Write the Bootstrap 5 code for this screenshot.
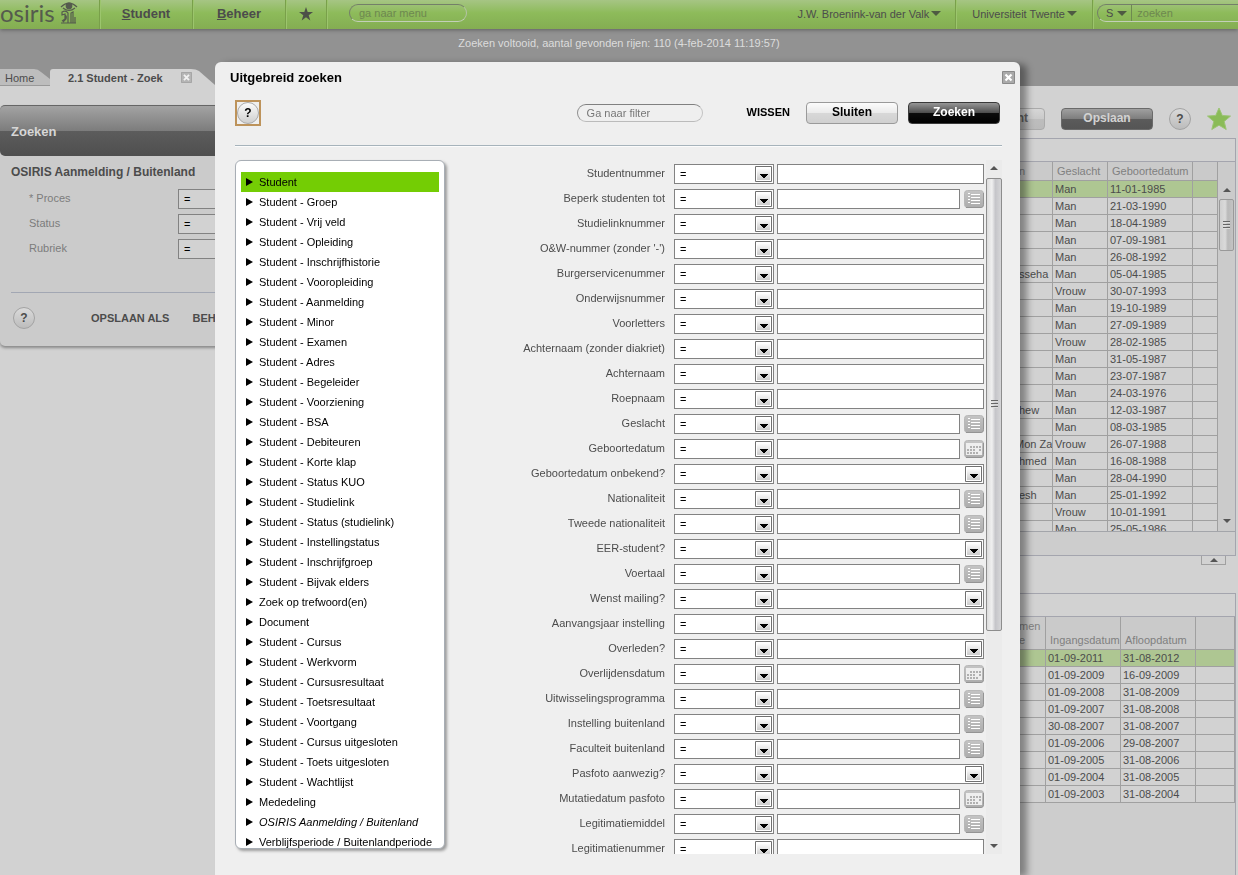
<!DOCTYPE html>
<html lang="nl">
<head>
<meta charset="utf-8">
<meta name="viewport" content="width=device-width, initial-scale=1">
<title>Osiris - Uitgebreid zoeken</title>
<link href="https://cdn.jsdelivr.net/npm/bootstrap@5.3.0/dist/css/bootstrap.min.css" rel="stylesheet">
<style>
  body { font: 11px/16px "Liberation Sans", Arial, sans-serif; color: #4c4c4c; background: #929292; height: 100vh; overflow: hidden; }
  a { color: inherit; text-decoration: none; }
  button, input, select { font: inherit; color: inherit; }
  button { padding: 0; border: 0; background: none; }
  svg { display: block; flex: none; }

  /* top bar */
  .topbar { height: 29px; background: linear-gradient(#a6c584, #8dbb5a 45%, #84ad52); box-shadow: 0 1px 4px rgba(0,0,0,.35); position: relative; }
  .topbar .cell { height: 29px; border-right: 1px solid #79a04a; box-shadow: 1px 0 #9cc56d; display: flex; align-items: center; justify-content: center; padding-bottom: 2px; }
  .topbar .logo { width: 100px; font: 24px/24px Lato, sans-serif; color: #555b4e; gap: 5px; padding-bottom: 4px; }
  .menuitem { width: 93px; font-size: 13px; font-weight: bold; }
  .favcell { width: 41px; }
  .pill { height: 18px; border: 1px solid #747f69; border-bottom-color: #c3cfb8; border-right-color: #b4c3a5; border-radius: 9px; background: transparent; padding: 0 9px; outline: 0; }
  .menufind { width: 118px; margin-left: 22px; }
  .topbar .pill::placeholder, .quick input::placeholder { color: #6d8750; opacity: 1; }
  .quick { width: 160px; margin-right: -19px; padding: 0; }
  .quick input { border: 0; background: none; width: 100px; padding: 0 5px; border-left: 1px solid #6e8a50; height: 16px; }
  .caret { width: 0; border: 5px solid transparent; border-top-color: #4e5a42; border-bottom: 0; }
  .user { padding: 0 14px 0 0; gap: 2px; }
  .school { padding: 0 15px 0 16px; gap: 2px; }
  .status-line { height: 40px; padding-top: 6px; color: #dcdcdc; }

  /* tabs */
  .tab { height: 17px; position: relative; z-index: 0; display: flex; align-items: center; }
  .tab svg.shape { position: absolute; left: 0; top: 0; z-index: -1; }
  .tab-home { width: 50px; padding-left: 5px; }
  .tab-active { width: 166px; padding-left: 18px; font-weight: bold; gap: 18px; }
  .page { background: #d2d2d2; flex: 1; min-height: 0; }

  /* side panel */
  .side { width: 405px; margin-top: 19px; background: #cbcbcb; height: 241px; border-radius: 5px; box-shadow: 0 2px 3px rgba(0,0,0,.35); }
  .side-head { height: 51px; padding: 1px 11px 0; font-size: 13px; font-weight: bold; color: #d6d6d6; border-radius: 5px; border-top: 1px solid #666; background: linear-gradient(#a3a3a3, #7c7c7c 50%, #5c5c5c 50%, #4f4f4f); }
  .side h2 { font-size: 12px; line-height: 16px; font-weight: bold; margin: 8px 0 9px 11px; }
  .side-row { height: 25px; padding-left: 29px; color: #7c7c7c; }
  .side-row label { width: 149px; line-height: 18px; }
  .side-foot { margin: 28px 0 0 11px; border-top: 1px solid #a2a7b3; padding: 14px 0 0 2px; font-weight: bold; gap: 23px; }
  .side-foot .help { margin-right: 33px; }
  .side .pick { background-color: #d2d2d2; }
  .help { width: 22px; height: 22px; border-radius: 50%; border: 1px solid #a3a3a3; background: linear-gradient(#dadada, #bcbcbc); font-size: 12px; line-height: 19px; font-weight: bold; text-align: center; }

  /* buttons */
  .act { width: 92px; height: 22px; border: 1px solid #9a9a9a; border-radius: 4px; font-size: 12px; line-height: 18px; font-weight: bold; color: #000; padding-bottom: 2px; background: linear-gradient(#fcfcfc, #ebebeb 48%, #d8d8d8 50%, #d0d0d0); }
  .act-dark { color: #fff; border-color: #3a3a3a; background: linear-gradient(#969696, #4e4e4e 48%, #0c0c0c 50%, #000); }
  .page .act { color: #666; border-color: #aaa; background: linear-gradient(#d6d6d6, #cacaca 48%, #bdbdbd 50%, #bababa); }
  .page .act-dark { color: #d2d2d2; border-color: #6a6a6a; background: linear-gradient(#a0a0a0, #7e7e7e 48%, #5b5b5b 50%, #555); }

  /* result tables */
  .results { min-width: 0; }
  .tools { height: 52px; padding: 22px 7px 0 0; }
  .grid-frame { border: 1px solid #a4a5ae; margin-right: 2px; }
  .grid-strip { height: 23px; border-bottom: 1px solid #a4a5ae; }
  .grid-view { height: 369px; overflow: hidden; }
  .grid-foot { height: 24px; border-top: 1px solid #a3a5aa; background: #cdcdcd; }
  .data { table-layout: fixed; width: 100%; border-collapse: separate; border-spacing: 0; }
  .data th, .data td { padding: 0 0 0 2px; height: 17px; line-height: 16px; border: 0 solid #a0a0a0; border-width: 0 1px 1px 0; white-space: nowrap; overflow: hidden; }
  .data th { background: #cacaca; color: #808080; font-weight: normal; height: 19px; padding: 0 0 2px 4px; line-height: 14px; vertical-align: bottom; }
  .data .person { padding-left: 4px; }
  .data .flush { padding: 0; text-align: right; }
  .data .picked td { background: #aec692; }
  .data-period th { height: 33px; }
  .c25 { width: 25px; } .c31 { width: 31px; } .c38 { width: 38px; } .c39 { width: 39px; } .c55 { width: 55px; } .c75 { width: 75px; } .c85 { width: 85px; }
  .bar { width: 17px; background: #cbcbcb; padding: 0 1px; flex: none; }
  .bar-top { height: 37px; padding-top: 26px; }
  .bar .thumb { height: 52px; border: 1px solid #999; border-radius: 2px; background: linear-gradient(90deg, #cfcfcf, #dadada 40%, #b9b9b9 60%, #c4c4c4); }
  .up, .down { width: 0; margin: 0 auto; border: 4px solid transparent; border-bottom: 4px solid #555; border-top: 0; }
  .down { border-top: 4px solid #555; border-bottom: 0; }
  .grip { width: 7px; height: 9px; background: repeating-linear-gradient(#666 0 1px, #ddd 1px 2px, transparent 2px 3px); }
  .fold { width: 25px; height: 9px; border: 1px solid #a0a0a0; border-top: 0; margin-right: 12px; }
  .period-frame { background: #cdcdcd; margin-top: 28px; border-bottom: 0; }
  .period-frame .grid-strip, .period-frame tbody { background: #d2d2d2; }

  /* dialog */
  .layer { position: fixed; inset: 62px 0 0; padding-right: 3px; }
  .dialog { width: 805px; margin: 0 auto; height: 100%; background: #efefef; border-radius: 6px 6px 0 0; box-shadow: 7px 2px 7px rgba(0,0,0,.38); }
  .dialog-title { height: 38px; padding: 9px 5px 0 15px; }
  .dialog-title h1 { font-size: 13px; line-height: 13px; font-weight: bold; margin: 0; color: #000; }
  .dialog-tools { margin: 0 18px 0 20px; height: 46px; border-bottom: 1px solid #a6b3bb; box-shadow: 0 1px #fbfbfb; }
  .dialog-tools .act { margin-top: 2px; }
  .dialog-tools .act-dark { margin: 2px 2px 0 10px; }
  .focusbox { border: 2px solid #bd935b; width: 26px; height: 26px; padding: 0; }
  .focusbox .help { display: block; color: #000; border-color: #aaa; background: linear-gradient(#fbfbfb, #cfcfcf); }
  .dialog .pill { width: 126px; border-color: #808080 #c4c4c4 #bbb #909090; margin-right: 44px; }
  .dialog .pill::placeholder { color: #777; opacity: 1; }
  .dialog-body { flex: 1; min-height: 0; margin: 14px 18px 21px 20px; }
  .tree { width: 210px; margin-bottom: 5px; background: #fff; border: 1px solid #a8aeb5; border-radius: 6px; box-shadow: 2px 2px 3px rgba(0,0,0,.35); padding: 11px 5px 0; overflow: hidden; color: #000; }
  .tree a { height: 20px; line-height: 20px; padding-left: 5px; gap: 6px; white-space: nowrap; }
  .tree a::before { content: ""; border: 4px solid transparent; border-left: 7px solid #000; border-right: 0; }
  .tree a.chosen { background: #74cd04; }
  .fields { flex: 1; min-width: 0; overflow: hidden; padding: 4px 2px 0 0; }
  .line { height: 25px; gap: 3px; }
  .line label { flex: 1; text-align: right; padding-right: 6px; line-height: 18px; }
  .pick, .entry { height: 20px; border: 1px solid #828282; border-radius: 0; background: #fff; padding: 0 5px; line-height: 18px; color: #000; outline: 0; min-width: 0; }
  .pick { width: 100px; appearance: none; background: #fff url("data:image/svg+xml,%3Csvg xmlns='http://www.w3.org/2000/svg' width='17' height='16'%3E%3ClinearGradient id='g' x2='0' y2='1'%3E%3Cstop stop-color='%23fff'/%3E%3Cstop offset='1' stop-color='%23ccc'/%3E%3C/linearGradient%3E%3Cpath d='M.5 .5h16v15H.5z' fill='%23fff' stroke='%23707070'/%3E%3Cpath d='M2 2h13v12H2z' fill='url(%23g)'/%3E%3Cpath d='M5 8h8v1h-1v1h-1v1h-1v1H8v-1H7v-1H6V9H5z'/%3E%3C/svg%3E") no-repeat right 1px top 1px; }
  .value { width: 207px; gap: 4px; }
  .value > :first-child { flex: 1; width: 0; }
  .scroller { width: 16px; background: #ebebeb; padding-top: 6px; }
  .scroller .thumb { height: 453px; margin-top: 8px; border: 1px solid #8d8d8d; border-radius: 2px; background: linear-gradient(90deg, #ddd, #f0f0f0 35%, #c5c5c9 60%, #d6d6d8); }
  .scroller .down { margin-top: auto; margin-bottom: 6px; }
</style>
</head>
<body class="d-flex flex-column">

<svg width="0" height="0" class="position-absolute" aria-hidden="true">
  <defs>
    <linearGradient id="grey" x2="0" y2="1"><stop stop-color="#c4c4c4"/><stop offset="1" stop-color="#acacac"/></linearGradient>
    <symbol id="list" viewBox="0 0 20 18">
      <rect x=".5" y=".5" width="19" height="17" rx="3" fill="url(#grey)" stroke="#b8b8b8"/>
      <path d="M2 17.500h15q2.500 0 2.500-3V3" fill="none" stroke="#949494"/>
      <path d="M4 3.500h2M4 6.500h2M4 9.500h2M4 12.500h2M7 4.500h9M7 7.500h9M7 10.500h9M7 13.500h9" stroke="#fff"/>
    </symbol>
    <symbol id="calendar" viewBox="0 0 20 18">
      <rect x=".5" y=".5" width="19" height="17" rx="3" fill="url(#grey)" stroke="#b8b8b8"/>
      <path d="M2 17.500h15q2.500 0 2.500-3V3" fill="none" stroke="#949494"/>
      <path d="M2 3h16v12H2z" fill="#eee"/>
      <path d="M6 7h11M3 10h8M15 10h2M3 13h11" stroke="#b0b0b0" stroke-width="2" stroke-dasharray="2 1"/>
    </symbol>
    <symbol id="cross" viewBox="0 0 13 13">
      <path d="M.5 .5h12v12H.5z" fill="#aaa" stroke="#8a8a8a"/>
      <path d="M3.500 3.500l6 6m0-6l-6 6" stroke="#fff" stroke-width="2.200"/>
    </symbol>
  </defs>
</svg>

<header class="topbar d-flex flex-shrink-0">
  <a href="#" class="cell logo justify-content-start">osiris
    <svg width="18" height="22" viewBox="0 0 18 22" fill="none" stroke="#555b4e" stroke-width="1.200">
      <path d="M1 5Q9-3 17 5M3 6q6 5 12 0"/><circle cx="9" cy="4" r="2.800" fill="#555b4e"/>
      <path d="M1 21h15M2 19l3-2V12L2 13v-3q4-2 6 1v10M5 13q2 1 1 4l-3 3M11 21V11l2-1v11M15 21v-6"/>
    </svg>
  </a>
  <a href="#" class="cell menuitem"><span><u>S</u>tudent</span></a>
  <a href="#" class="cell menuitem"><span><u>B</u>eheer</span></a>
  <a href="#" class="cell favcell" aria-label="Favorieten"><svg width="14" height="14" viewBox="0 0 14 14"><path d="M7 0l1.700 5H14L9.700 8.200 11.300 13.500 7 10.300 2.700 13.500 4.300 8.200 0 5h5.300z" fill="#4c4f48"/></svg></a>
  <div class="pt-1"><input class="pill menufind d-block" placeholder="ga naar menu" aria-label="ga naar menu"></div>
  <a href="#" class="cell ms-auto user">J.W. Broenink-van der Valk <i class="caret"></i></a>
  <a href="#" class="cell school">Universiteit Twente <i class="caret"></i></a>
  <div class="ps-1 pt-1"><div class="pill quick d-flex align-items-center">
    <button class="d-flex align-items-center gap-1 ps-2 pe-1" aria-label="Zoeken in">S <i class="caret"></i></button>
    <input placeholder="zoeken" aria-label="zoeken">
  </div></div>
</header>

<div class="status-line text-center flex-shrink-0">Zoeken voltooid, aantal gevonden rijen: 110 (4-feb-2014 11:19:57)</div>

<nav class="d-flex flex-shrink-0">
  <a href="#" class="tab tab-home"><svg class="shape" width="50" height="17"><path d="M0 0H34Q38 0 41 3L50 10V17H0z" fill="#bdbdbd"/><path d="M0 16.500h50" stroke="#999"/></svg>Home</a>
  <a href="#" class="tab tab-active"><svg class="shape" width="166" height="17"><path d="M0 17V3Q0 0 3 0H141Q146 0 149 2L165 16V17z" fill="#d2d2d2"/></svg>2.1 Student - Zoek
    <svg width="11" height="11" opacity=".7"><use href="#cross"/></svg></a>
</nav>

<main class="page d-flex">
  <section class="side flex-shrink-0">
    <div class="side-head d-flex align-items-center">Zoeken</div>
    <h2>OSIRIS Aanmelding / Buitenland</h2>
    <div class="side-row d-flex"><label for="s1">* Proces</label><select class="pick" id="s1"><option>=</option></select></div>
    <div class="side-row d-flex"><label for="s2">Status</label><select class="pick" id="s2"><option>=</option></select></div>
    <div class="side-row d-flex"><label for="s3">Rubriek</label><select class="pick" id="s3"><option>=</option></select></div>
    <div class="side-foot d-flex align-items-center"><button class="help">?</button><a href="#">OPSLAAN ALS</a><a href="#">BEHEER</a></div>
  </section>

  <section class="results flex-fill d-flex flex-column">
    <div class="tools d-flex justify-content-end align-items-start gap-3 flex-shrink-0">
      <button class="act text-end pe-3">Overzicht</button>
      <button class="act act-dark">Opslaan</button>
      <button class="help">?</button>
      <button aria-label="Favoriet"><svg width="24" height="24" viewBox="0 0 24 24"><path d="M12 0l3.300 7.500 8.200.6-6.300 5.300 2 8.100L12 17.200 4.800 21.500l2-8.100L.5 8.100l8.200-.6z" fill="#8abb57" stroke="#9cc474"/></svg></button>
    </div>
    <div class="grid-frame flex-shrink-0">
      <div class="grid-strip"></div>
      <div class="grid-view d-flex">
        <div class="flex-fill"><table class="data"><colgroup><col><col class="c38"><col class="c55"><col class="c85"><col class="c25"></colgroup>
          <thead><tr><th></th><th>n</th><th>Geslacht</th><th>Geboortedatum</th><th></th></tr></thead><tbody id="students"></tbody></table></div>
        <div class="bar d-flex flex-column"><div class="bar-top"><div class="up"></div></div><div class="thumb d-flex align-items-center justify-content-center"><div class="grip"></div></div><div class="down mt-auto mb-2"></div></div>
      </div>
      <div class="grid-foot"></div>
    </div>
    <button class="fold align-self-end flex-shrink-0" aria-label="Inklappen"><div class="up"></div></button>
    <div class="grid-frame period-frame flex-fill">
      <div class="grid-strip"></div>
      <table class="data data-period"><colgroup><col><col class="c31"><col class="c75"><col class="c75"><col class="c39"></colgroup>
        <thead><tr><th></th><th>men<br>e</th><th>Ingangsdatum</th><th>Afloopdatum</th><th></th></tr></thead><tbody id="periods"></tbody></table>
    </div>
  </section>
</main>

<div class="layer">
  <div class="dialog d-flex flex-column" role="dialog" aria-labelledby="dlg">
    <div class="dialog-title d-flex justify-content-between"><h1 id="dlg">Uitgebreid zoeken</h1><button class="align-self-start" aria-label="Venster sluiten"><svg width="13" height="13"><use href="#cross"/></svg></button></div>
    <div class="dialog-tools d-flex align-items-start flex-shrink-0">
      <div class="focusbox me-auto"><button class="help">?</button></div>
      <input class="pill mt-1" placeholder="Ga naar filter" aria-label="Ga naar filter">
      <button class="fw-bold text-black me-3 mt-1">WISSEN</button>
      <button class="act">Sluiten</button>
      <button class="act act-dark">Zoeken</button>
    </div>
    <div class="dialog-body d-flex">
      <nav class="tree flex-shrink-0" id="tree"></nav>
      <form class="fields" id="fields"></form>
      <div class="scroller d-flex flex-column"><div class="up"></div><div class="thumb d-flex align-items-center justify-content-center"><div class="grip"></div></div><div class="down"></div></div>
    </div>
  </div>
</div>

<script src="https://cdn.jsdelivr.net/npm/bootstrap@5.3.0/dist/js/bootstrap.bundle.min.js"></script>
<script>
  const tree = ["Student", "Student - Groep", "Student - Vrij veld", "Student - Opleiding", "Student - Inschrijfhistorie", "Student - Vooropleiding", "Student - Aanmelding", "Student - Minor", "Student - Examen", "Student - Adres", "Student - Begeleider", "Student - Voorziening", "Student - BSA", "Student - Debiteuren", "Student - Korte klap", "Student - Status KUO", "Student - Studielink", "Student - Status (studielink)", "Student - Instellingstatus", "Student - Inschrijfgroep", "Student - Bijvak elders", "Zoek op trefwoord(en)", "Document", "Student - Cursus", "Student - Werkvorm", "Student - Cursusresultaat", "Student - Toetsresultaat", "Student - Voortgang", "Student - Cursus uitgesloten", "Student - Toets uitgesloten", "Student - Wachtlijst", "Mededeling", "OSIRIS Aanmelding / Buitenland", "Verblijfsperiode / Buitenlandperiode"];
  document.getElementById("tree").innerHTML = tree.map((t, i) =>
    `<a href="#" class="d-flex align-items-center${i ? "" : " chosen"}${t.startsWith("OSIRIS") ? " fst-italic" : ""}">${t}</a>`).join("");

  // kind of value: t = text, l = text with list, c = text with calendar, s = drop-down
  const fields = [["Studentnummer", "t"], ["Beperk studenten tot", "l"], ["Studielinknummer", "t"], ["O&amp;W-nummer (zonder '-')", "t"], ["Burgerservicenummer", "t"], ["Onderwijsnummer", "t"], ["Voorletters", "t"], ["Achternaam (zonder diakriet)", "t"], ["Achternaam", "t"], ["Roepnaam", "t"], ["Geslacht", "l"], ["Geboortedatum", "c"], ["Geboortedatum onbekend?", "s"], ["Nationaliteit", "l"], ["Tweede nationaliteit", "l"], ["EER-student?", "s"], ["Voertaal", "l"], ["Wenst mailing?", "s"], ["Aanvangsjaar instelling", "t"], ["Overleden?", "s"], ["Overlijdensdatum", "c"], ["Uitwisselingsprogramma", "l"], ["Instelling buitenland", "l"], ["Faculteit buitenland", "l"], ["Pasfoto aanwezig?", "s"], ["Mutatiedatum pasfoto", "c"], ["Legitimatiemiddel", "l"], ["Legitimatienummer", "t"]];
  document.getElementById("fields").innerHTML = fields.map(([name, kind], i) => {
    const id = "f" + i;
    const box = kind === "s" ? `<select class="pick" id="${id}"><option></option></select>` : `<input class="entry" id="${id}">`;
    const icon = kind === "l" ? "list" : kind === "c" ? "calendar" : "";
    const btn = icon ? `<button type="button" aria-label="Kies"><svg width="20" height="18"><use href="#${icon}"/></svg></button>` : "";
    return `<div class="line d-flex align-items-start"><label for="${id}">${name}</label><select class="pick" aria-label="Vergelijking"><option>=</option></select><div class="value d-flex align-items-center">${box}${btn}</div></div>`;
  }).join("");

  const students = [["", "Man", "11-01-1985"], ["", "Man", "21-03-1990"], ["", "Man", "18-04-1989"], ["", "Man", "07-09-1981"], ["", "Man", "26-08-1992"], ["sseha", "Man", "05-04-1985"], ["", "Vrouw", "30-07-1993"], ["", "Man", "19-10-1989"], ["", "Man", "27-09-1989"], ["", "Vrouw", "28-02-1985"], ["", "Man", "31-05-1987"], ["", "Man", "23-07-1987"], ["", "Man", "24-03-1976"], ["hew", "Man", "12-03-1987"], ["", "Man", "08-03-1985"], ["Mon Za", "Vrouw", "26-07-1988"], ["hmed", "Man", "16-08-1988"], ["", "Man", "28-04-1990"], ["esh", "Man", "25-01-1992"], ["", "Vrouw", "10-01-1991"], ["", "Man", "25-05-1986"]];
  const periods = [["01-09-2011", "31-08-2012"], ["01-09-2009", "16-09-2009"], ["01-09-2008", "31-08-2009"], ["01-09-2007", "31-08-2008"], ["30-08-2007", "31-08-2007"], ["01-09-2006", "29-08-2007"], ["01-09-2005", "31-08-2006"], ["01-09-2004", "31-08-2005"], ["01-09-2003", "31-08-2004"]];
  document.getElementById("students").innerHTML = students.map(([n, g, d], i) =>
    `<tr${i ? "" : ' class="picked"'}><td></td><td class="${n === "Mon Za" ? "flush" : "person"}">${n}</td><td>${g}</td><td>${d}</td><td></td></tr>`).join("");
  document.getElementById("periods").innerHTML = periods.map(([a, b], i) =>
    `<tr${i ? "" : ' class="picked"'}><td></td><td></td><td>${a}</td><td>${b}</td><td></td></tr>`).join("");
</script>
</body>
</html>
